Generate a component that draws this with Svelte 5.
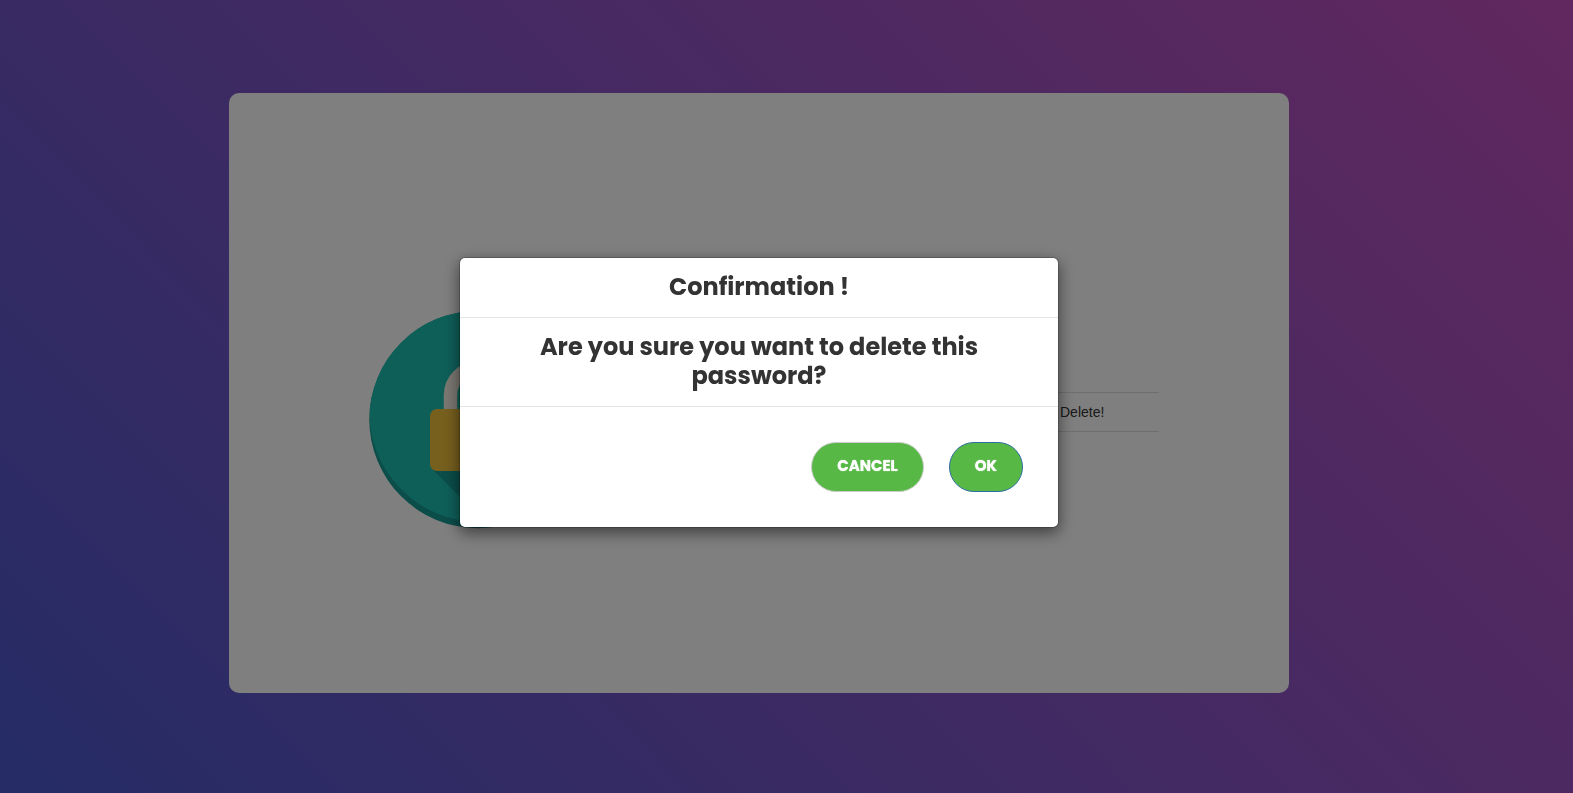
<script>
  let open = $state(true);
  const close = () => (open = false);
</script>

<main class="page">
  <section class="card">
    <svg class="lock" viewBox="0 0 218 218" aria-hidden="true">
      <defs>
        <clipPath id="disc"><circle cx="109" cy="108.5" r="108.7" /></clipPath>
      </defs>
      <g clip-path="url(#disc)">
        <rect width="218" height="218" fill="#179b93" />
        <circle cx="109.5" cy="101.5" r="109" fill="#1ebfb3" />
        <path d="M64 159 L130 225 L225 225 L225 163 L156 94 Z" fill="#179b93" />
      </g>
      <path d="M81.5 100 V84 a27 27 0 0 1 54 0 V100" fill="none" stroke="#f6f0e4" stroke-width="13.5" />
      <rect x="61" y="98" width="96" height="62" rx="7" fill="#eebe3c" />
    </svg>
    <table class="entries">
      <tbody>
        <tr>
          <td></td>
          <td class="action"><button class="delete" onclick={() => (open = true)}>Delete!</button></td>
        </tr>
      </tbody>
    </table>
  </section>
</main>

{#if open}
  <div class="overlay">
    <div class="modal" role="dialog" aria-modal="true" aria-labelledby="title">
      <header><h3 id="title">Confirmation !</h3></header>
      <div class="body"><h3>Are you sure you want to delete this password?</h3></div>
      <footer>
        <button class="btn" onclick={close}>CANCEL</button>
        <button class="btn primary" onclick={close}>OK</button>
      </footer>
    </div>
  </div>
{/if}

<style>
  :global(body) {
    margin: 0;
    font-family: "Liberation Sans", Arial, sans-serif;
    font-size: 14px;
    line-height: 20px;
    color: #333;
  }
  .page, .page *, .overlay, .overlay * {
    box-sizing: border-box;
  }
  .page {
    min-height: 100vh;
    padding: 93px 55px 100px 0;
    background: linear-gradient(-135deg, #c250be, #4a58cc);
  }
  .card {
    display: flex;
    justify-content: space-between;
    align-items: flex-start;
    width: 90%;
    max-width: 1060px;
    min-height: 600px;
    margin: 0 auto;
    padding: 218px 130px 32px 140px;
    border-radius: 10px;
    background: #fff;
  }
  .lock {
    width: 218px;
    flex: none;
  }
  .entries {
    width: 390px;
    margin-top: 81px;
    border-collapse: collapse;
    border-bottom: 1px solid #ddd;
  }
  td {
    padding: 9px 8px;
    border-top: 1px solid #ddd;
  }
  .action {
    width: 107px;
  }
  .delete {
    padding: 0;
    border: 0;
    background: none;
    font: inherit;
    color: inherit;
    cursor: pointer;
  }
  .overlay {
    position: fixed;
    inset: 0;
    display: flex;
    align-items: center;
    justify-content: center;
    padding: 0 55px 9px 0;
    background: rgba(0, 0, 0, 0.5);
  }
  .modal {
    width: 600px;
    max-width: 100%;
    border: 1px solid rgba(0, 0, 0, 0.2);
    border-radius: 6px;
    background: #fff;
    background-clip: padding-box;
    box-shadow: 0 5px 15px rgba(0, 0, 0, 0.5);
  }
  header, .body {
    padding: 14px 15px 16px;
    border-bottom: 1px solid #e5e5e5;
  }
  h3 {
    margin: 0;
    font-family: Poppins, Inter, sans-serif;
    font-size: 24px;
    line-height: 29px;
    font-weight: 700;
    text-align: center;
  }
  footer {
    display: flex;
    justify-content: flex-end;
    gap: 25px;
    padding: 35px;
  }
  .btn {
    height: 50px;
    padding: 0 25px 2px;
    border: 1px solid #ccc;
    border-radius: 25px;
    background: #57b846;
    color: #fff;
    font-family: Poppins, Inter, sans-serif;
    font-size: 15px;
    line-height: 22px;
    font-weight: 700;
    text-shadow: 0 0 1px #fff;
    cursor: pointer;
  }
  .primary {
    border-color: #2e6da4;
  }
</style>
